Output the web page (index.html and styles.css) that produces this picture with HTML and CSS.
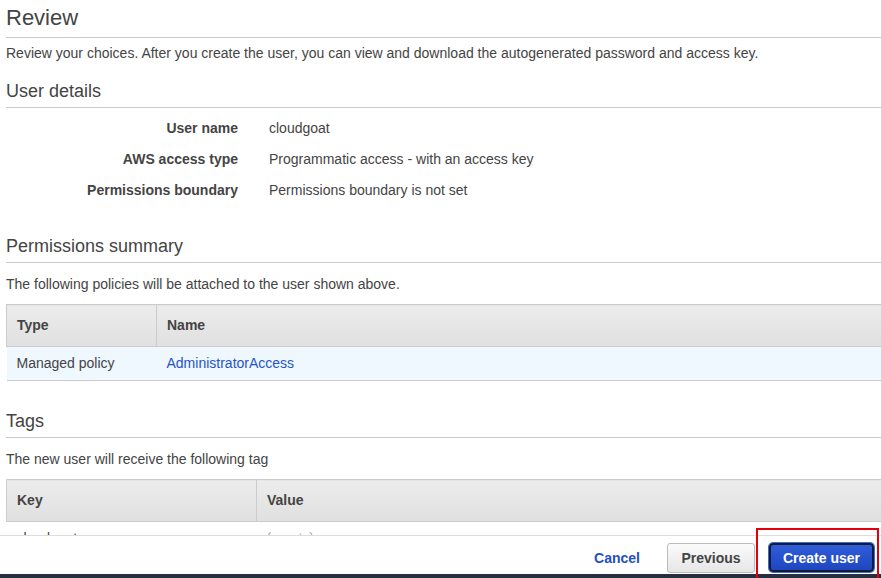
FILE: index.html
```html
<!DOCTYPE html>
<html lang="en">
<head>
<meta charset="utf-8">
<title>Review</title>
<link rel="stylesheet" href="styles.css">
</head>
<body>
<main class="page">
  <h2 class="page-title">Review</h2>
  <p class="lead">Review your choices. After you create the user, you can view and download the autogenerated password and access key.</p>

  <section class="section">
    <h3 class="section-title">User details</h3>
    <dl class="details">
      <dt>User name</dt><dd>cloudgoat</dd>
      <dt>AWS access type</dt><dd>Programmatic access - with an access key</dd>
      <dt>Permissions boundary</dt><dd>Permissions boundary is not set</dd>
    </dl>
  </section>

  <section class="section section-perms">
    <h3 class="section-title">Permissions summary</h3>
    <p class="section-text">The following policies will be attached to the user shown above.</p>
    <table class="grid grid-policies">
      <thead><tr><th class="col-first">Type</th><th>Name</th></tr></thead>
      <tbody><tr class="row-selected"><td>Managed policy</td><td><a class="link" href="#">AdministratorAccess</a></td></tr></tbody>
    </table>
  </section>

  <section class="section section-tags">
    <h3 class="section-title">Tags</h3>
    <p class="section-text">The new user will receive the following tag</p>
    <table class="grid grid-tags">
      <thead><tr><th class="col-first">Key</th><th>Value</th></tr></thead>
      <tbody><tr><td>cloudgoat</td><td class="muted">(empty)</td></tr></tbody>
    </table>
  </section>
</main>

<footer class="wizard-footer">
  <div class="footer-bar">
    <button class="btn-link" type="button">Cancel</button>
    <button class="btn btn-secondary" type="button">Previous</button>
    <button class="btn btn-primary" type="button">Create user</button>
  </div>
  <div class="console-strip"></div>
</footer>
<div class="highlight-box"></div>
</body>
</html>
```

FILE: styles.css
```css
* { box-sizing: border-box; }

html, body {
  margin: 0;
  padding: 0;
}

body {
  width: 881px;
  height: 578px;
  overflow: hidden;
  font-family: "Liberation Sans", Arial, sans-serif;
  font-size: 14px;
  line-height: 20px;
  color: #444;
  background: #fff;
}

.page {
  padding: 0 0 0 6px;
  margin-right: -20px;
}

.page-title {
  margin: 0;
  padding: 4px 0 5px;
  font-size: 22px;
  line-height: 28px;
  font-weight: normal;
  color: #444;
  border-bottom: 1px solid #ccc;
}

.lead {
  margin: 5px 0 0;
}

.section-title {
  margin: 16px 0 0;
  padding: 0 0 4px;
  font-size: 18px;
  line-height: 24px;
  font-weight: normal;
  color: #444;
  border-bottom: 1px solid #ccc;
}

.details {
  display: grid;
  grid-template-columns: 232px 1fr;
  column-gap: 31px;
  row-gap: 11px;
  margin: 0;
  padding-top: 10px;
}

.details dt {
  font-weight: bold;
  text-align: right;
}

.details dd {
  margin: 0;
}

.section-perms .section-title { margin-top: 34px; }
.section-tags .section-title { margin-top: 28px; }

.section-text {
  margin: 11px 0 0;
}

.grid {
  width: 100%;
  margin-top: 10px;
  border-collapse: collapse;
  border-spacing: 0;
}

.grid th {
  text-align: left;
  font-weight: bold;
  padding: 10px 10px 11px;
  line-height: 20px;
  background: linear-gradient(#ececec, #e0e0e0);
  border: 1px solid #ccc;
  border-right: 0;
}

.grid td {
  padding: 6px 10px 7px;
  line-height: 20px;
  border-bottom: 1px solid #ccc;
}

.grid-policies .col-first { width: 150px; }
.grid-tags .col-first { width: 250px; }

.row-selected td { background: #eff7ff; }

.link {
  color: #1f55c6;
  text-decoration: none;
}

.muted { color: #aaa; }

.wizard-footer {
  position: fixed;
  left: 0;
  right: 0;
  bottom: 0;
  background: #fff;
  border-top: 1px solid #ddd;
}

.footer-bar {
  height: 38px;
  display: flex;
  justify-content: flex-end;
  align-items: flex-start;
  padding: 7px 7px 0 0;
}

.console-strip {
  height: 4px;
  background: #262f3e;
}

.btn-link {
  margin: 1px 27px 0 0;
  padding: 4px 0;
  border: 0;
  background: none;
  font: bold 14px/20px "Liberation Sans", Arial, sans-serif;
  color: #1f4fc2;
  cursor: pointer;
}

.btn {
  font: bold 14px/20px "Liberation Sans", Arial, sans-serif;
  cursor: pointer;
}

.btn-secondary {
  width: 88px;
  height: 30px;
  margin-right: 14px;
  padding: 0;
  color: #444;
  border: 1px solid #bbb;
  border-radius: 3px;
  background: linear-gradient(#fbfbfb, #e6e6e6);
}

.btn-primary {
  width: 105px;
  height: 29px;
  padding: 0;
  color: #fff;
  border: 2px solid #141c33;
  border-radius: 4px;
  background: linear-gradient(#2f5dd8, #1f46c1);
  box-shadow: 0 0 0 1px #3a6ad8;
}

.highlight-box {
  position: fixed;
  left: 756px;
  top: 528px;
  width: 123px;
  height: 50px;
  border: 2px solid #e3000b;
  border-bottom: 0;
  pointer-events: none;
}
```
